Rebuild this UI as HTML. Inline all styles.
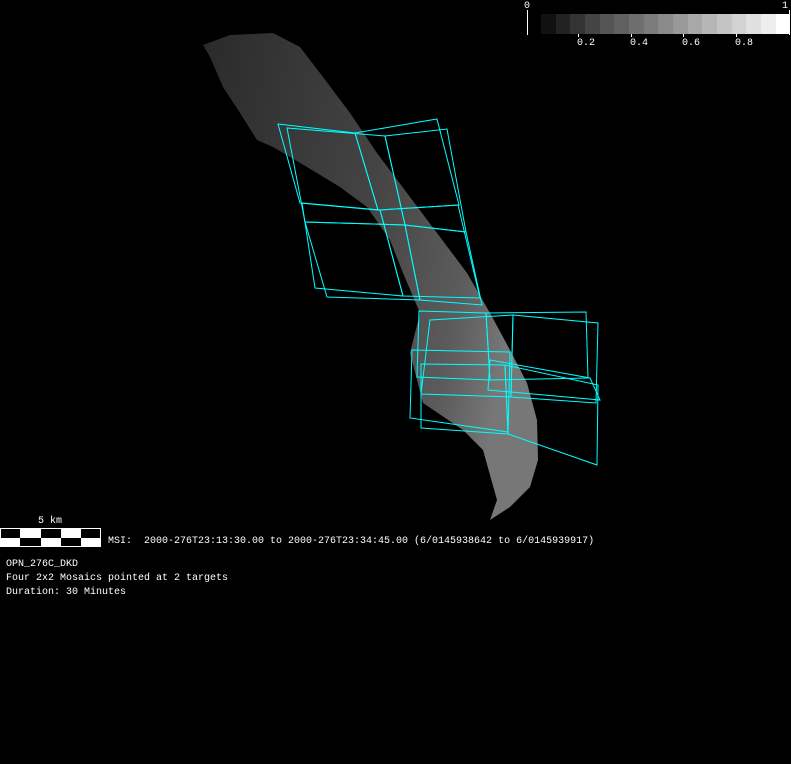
<!DOCTYPE html>
<html><head><meta charset="utf-8"><style>
html,body{margin:0;padding:0;background:#000;}
body{width:791px;height:764px;position:relative;overflow:hidden;font-family:"Liberation Mono",monospace;font-size:10px;color:#fff;}
.t{position:absolute;white-space:pre;line-height:12px;}
</style></head><body>
<svg width="791" height="764" style="position:absolute;left:0;top:0">
<defs>
<linearGradient id="g" x1="0" y1="0" x2="1" y2="0.25">
<stop offset="0" stop-color="#2a2a2a"/><stop offset="0.55" stop-color="#444"/><stop offset="0.85" stop-color="#5c5c5c"/><stop offset="1" stop-color="#777"/>
</linearGradient>
</defs>
<polygon fill="url(#g)" points="203,45 230,35 273,33 300,47 323,77 350,113 377,153 407,193 437,233 467,273 490,313 510,350 527,383 537,420 538,460 530,487 510,507 490,520 497,500 483,450 463,430 423,403 410,353 420,313 403,273 390,240 367,207 340,187 307,167 273,147 257,140 240,113 223,87 210,57"/>
<g fill="none" stroke="#00ffff" stroke-width="1">
<polygon points="278,124 355,133 378,210 300,203"/>
<polygon points="355,133 437,119 459,205 378,210"/>
<polygon points="287,128 385,136 405,225 305,222"/>
<polygon points="385,136 447,129 466,232 405,225"/>
<polygon points="302,203 380,210 403,296 315,288"/>
<polygon points="380,210 458,205 480,298 403,296"/>
<polygon points="305,222 405,225 420,300 327,297"/>
<polygon points="405,225 466,232 482,305 420,300"/>
<polygon points="419,311 486,313 490,380 417,377"/>
<polygon points="486,313 586,312 588,378 490,380"/>
<polygon points="412,350 510,352 508,432 410,418"/>
<polygon points="430,320 513,315 511,397 421,394"/>
<polygon points="513,315 598,323 596,403 511,397"/>
<polygon points="421,364 505,365 508,434 421,428"/>
<polygon points="505,365 598,385 597,465 508,434"/>
<polygon points="490,360 590,378 600,400 488,390"/>
</g>
<g>
<rect x="541" y="14" width="15" height="20" fill="#111"/>
<rect x="556" y="14" width="14" height="20" fill="#222"/>
<rect x="570" y="14" width="15" height="20" fill="#333"/>
<rect x="585" y="14" width="15" height="20" fill="#444"/>
<rect x="600" y="14" width="14" height="20" fill="#555"/>
<rect x="614" y="14" width="15" height="20" fill="#606060"/>
<rect x="629" y="14" width="15" height="20" fill="#6e6e6e"/>
<rect x="644" y="14" width="14" height="20" fill="#7c7c7c"/>
<rect x="658" y="14" width="15" height="20" fill="#8a8a8a"/>
<rect x="673" y="14" width="15" height="20" fill="#999"/>
<rect x="688" y="14" width="14" height="20" fill="#a8a8a8"/>
<rect x="702" y="14" width="15" height="20" fill="#b6b6b6"/>
<rect x="717" y="14" width="15" height="20" fill="#c4c4c4"/>
<rect x="732" y="14" width="14" height="20" fill="#d2d2d2"/>
<rect x="746" y="14" width="15" height="20" fill="#e0e0e0"/>
<rect x="761" y="14" width="15" height="20" fill="#eee"/>
<rect x="776" y="14" width="13" height="20" fill="#fff"/>
<rect x="527" y="10" width="1" height="25" fill="#fff"/>
<rect x="789" y="10" width="1" height="25" fill="#fff"/>
<rect x="578" y="34" width="1" height="3" fill="#fff"/>
<rect x="631" y="34" width="1" height="3" fill="#fff"/>
<rect x="683" y="34" width="1" height="3" fill="#fff"/>
<rect x="736" y="34" width="1" height="3" fill="#fff"/>
</g>
<rect x="0.5" y="528.5" width="100" height="18" fill="#fff" stroke="#fff"/>
<rect x="1" y="529" width="19" height="9" fill="#000"/>
<rect x="41" y="529" width="20" height="9" fill="#000"/>
<rect x="81" y="529" width="19" height="9" fill="#000"/>
<rect x="20" y="538" width="21" height="8" fill="#000"/>
<rect x="61" y="538" width="20" height="8" fill="#000"/>
</svg>
<div class="t" style="left:524px;top:1px">0</div>
<div class="t" style="left:782px;top:1px">1</div>
<div class="t" style="left:577px;top:38px">0.2</div>
<div class="t" style="left:630px;top:38px">0.4</div>
<div class="t" style="left:682px;top:38px">0.6</div>
<div class="t" style="left:735px;top:38px">0.8</div>
<div class="t" style="left:38px;top:516px">5 km</div>
<div class="t" style="left:108px;top:536px">MSI:  2000-276T23:13:30.00 to 2000-276T23:34:45.00 (6/0145938642 to 6/0145939917)</div>
<div class="t" style="left:6px;top:559px">OPN_276C_DKD</div>
<div class="t" style="left:6px;top:573px">Four 2x2 Mosaics pointed at 2 targets</div>
<div class="t" style="left:6px;top:587px">Duration: 30 Minutes</div>
</body></html>
